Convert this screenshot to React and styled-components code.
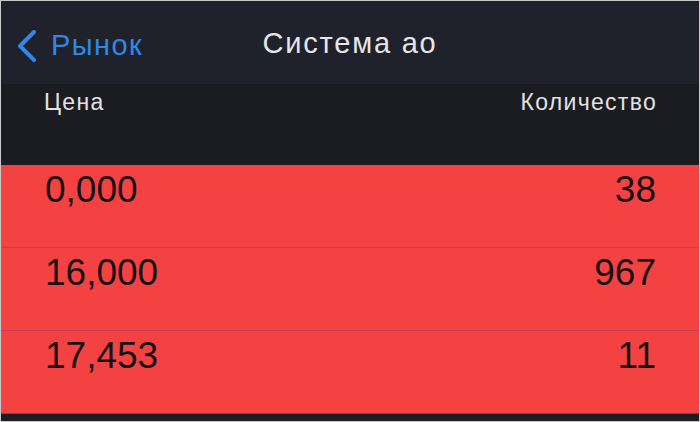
import React from 'react';
import styled, { createGlobalStyle } from 'styled-components';

const GlobalStyle = createGlobalStyle`
  *, *::before, *::after {
    box-sizing: border-box;
  }
  html, body {
    margin: 0;
    padding: 0;
    background: #ffffff;
  }
  body {
    font-family: "Liberation Sans", Arial, sans-serif;
  }
`;

const Screen = styled.div`
  width: 700px;
  height: 422px;
  border: 1px solid #c9c9cc;
  background: #1a1c22;
  display: flex;
  flex-direction: column;
  overflow: hidden;
`;

const NavBar = styled.div`
  height: 83px;
  flex: none;
  background: #1f222a;
  display: grid;
  grid-template-columns: 1fr auto 1fr;
  align-items: center;
`;

const BackButton = styled.div`
  display: flex;
  align-items: center;
  gap: 12px;
  padding-left: 14px;
  padding-top: 6px;
  color: #2f87ea;
  font-size: 29px;
  letter-spacing: 1.4px;
`;

const Title = styled.div`
  color: #e6e6e8;
  font-size: 29px;
  letter-spacing: 1.8px;
  padding-top: 2px;
`;

const ColumnHeader = styled.div`
  height: 81px;
  flex: none;
  background: #1a1c22;
  display: flex;
  justify-content: space-between;
  align-items: flex-start;
  padding: 5px 42px 0 43px;
  color: #e2e2e4;
  font-size: 23px;
  letter-spacing: 1.3px;
`;

const Rows = styled.div`
  display: flex;
  flex-direction: column;
`;

const Row = styled.div`
  height: 83px;
  background: #f44242;
  border-bottom: 1px solid ${(p) => (p.$last ? '#8c3a44' : '#c4404c')};
  display: flex;
  justify-content: space-between;
  align-items: flex-start;
  padding: 6px 43px 0 44px;
  font-size: 37px;
  line-height: 37px;
  color: #141014;
`;

const Footer = styled.div`
  flex: 1;
  background: #1b1d23;
`;

const Chevron = () => (
  <svg width="24" height="32" viewBox="0 0 24 32">
    <path
      d="M19 2 L5 16 L19 30"
      fill="none"
      stroke="#2f87ea"
      strokeWidth="4"
      strokeLinecap="round"
      strokeLinejoin="round"
    />
  </svg>
);

const orders = [
  { price: '0,000', qty: '38' },
  { price: '16,000', qty: '967' },
  { price: '17,453', qty: '11' },
];

const App = () => {
  return (
    <>
      <GlobalStyle />
      <Screen>
        <NavBar>
          <BackButton>
            <Chevron />
            <span>Рынок</span>
          </BackButton>
          <Title>Система ао</Title>
          <div />
        </NavBar>
        <ColumnHeader>
          <span>Цена</span>
          <span>Количество</span>
        </ColumnHeader>
        <Rows>
          {orders.map((o, i) => (
            <Row key={o.price} $last={i === orders.length - 1}>
              <span>{o.price}</span>
              <span>{o.qty}</span>
            </Row>
          ))}
        </Rows>
        <Footer />
      </Screen>
    </>
  );
};

export default App;
